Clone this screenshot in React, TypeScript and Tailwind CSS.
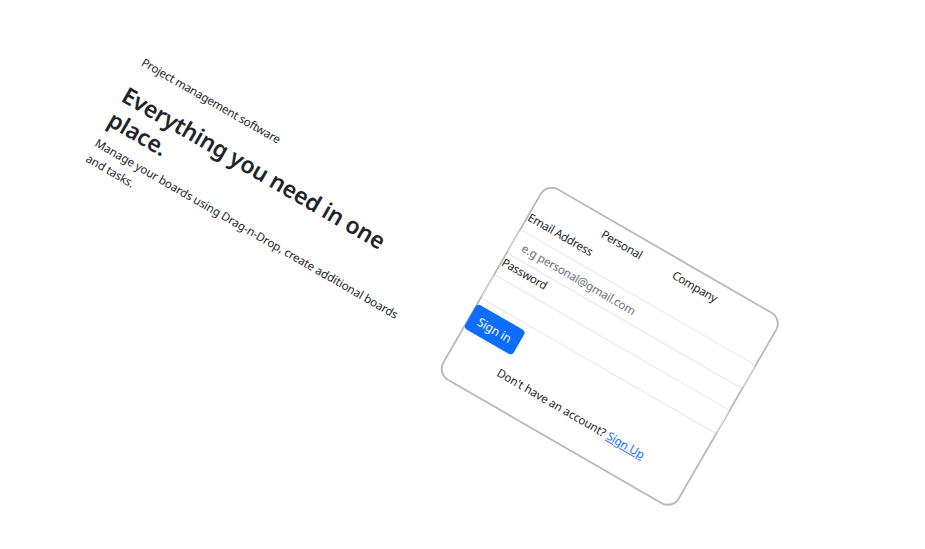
import React from "react";

type FieldProps = { id: string; label: string; type: string; placeholder?: string };

function Field({ id, label, type, placeholder }: FieldProps) {
  return (
    <div className="flex h-[52px] flex-col justify-between">
      <label htmlFor={id} className="block h-[18px] pl-px leading-[18.6px] tracking-[-0.3px]">
        {label}
      </label>
      <input
        id={id}
        type={type}
        placeholder={placeholder}
        className="block h-[28px] w-full rounded-[4px] border border-[#e5e8eb] bg-transparent px-[10px] text-[11.6px] tracking-[-0.26px] placeholder:text-[#6b7177]"
      />
    </div>
  );
}

export default function App() {
  return (
    <main className="h-[549px] w-[925px] overflow-hidden bg-white font-['Noto_Sans',sans-serif] text-[11.6px] leading-[17.3px] tracking-[-0.18px] text-[#212529]">
      <div className="flex w-[684px] origin-top-left [transform:rotate(30deg)_translate(154.2px,-116px)] items-start justify-between whitespace-nowrap">
        <section className="pt-[89px]">
          <p className="tracking-[-0.25px]">Project management software</p>
          <h1 className="mt-[15px] text-[23px] leading-[27.6px] font-semibold tracking-[-0.26px]">
            Everything you need in one
            <br />
            place.
          </h1>
          <p className="mt-[5.5px] leading-[18.4px] tracking-[-0.14px]">
            Manage your boards using Drag-n-Drop, create additional boards
            <br />
            and tasks.
          </p>
        </section>

        <section className="h-[221.5px] w-[274px] rounded-[14px] p-px shadow-[inset_0_0_0_2px_#bababa]">
          <div className="flex pt-[7px] pl-[73px] tracking-[-0.3px]">
            <span className="w-[82px]">Personal</span>
            <span>Company</span>
          </div>
          <form className="mt-[5.2px]">
            <Field id="email" label="Email Address" type="email" placeholder="e.g personal@gmail.com" />
            <Field id="password" label="Password" type="password" />
            <button
              type="button"
              className="mt-[6px] block h-[28px] w-[56px] rounded-[4px] bg-[#0d6efd] text-center text-[12px] text-white"
            >
              Sign in
            </button>
          </form>
          <p className="mt-[11.5px] text-center tracking-[-0.12px]">
            Don't have an account?{" "}
            <a href="#" className="text-[#0d6efd] underline">
              Sign Up
            </a>
          </p>
        </section>
      </div>
    </main>
  );
}
